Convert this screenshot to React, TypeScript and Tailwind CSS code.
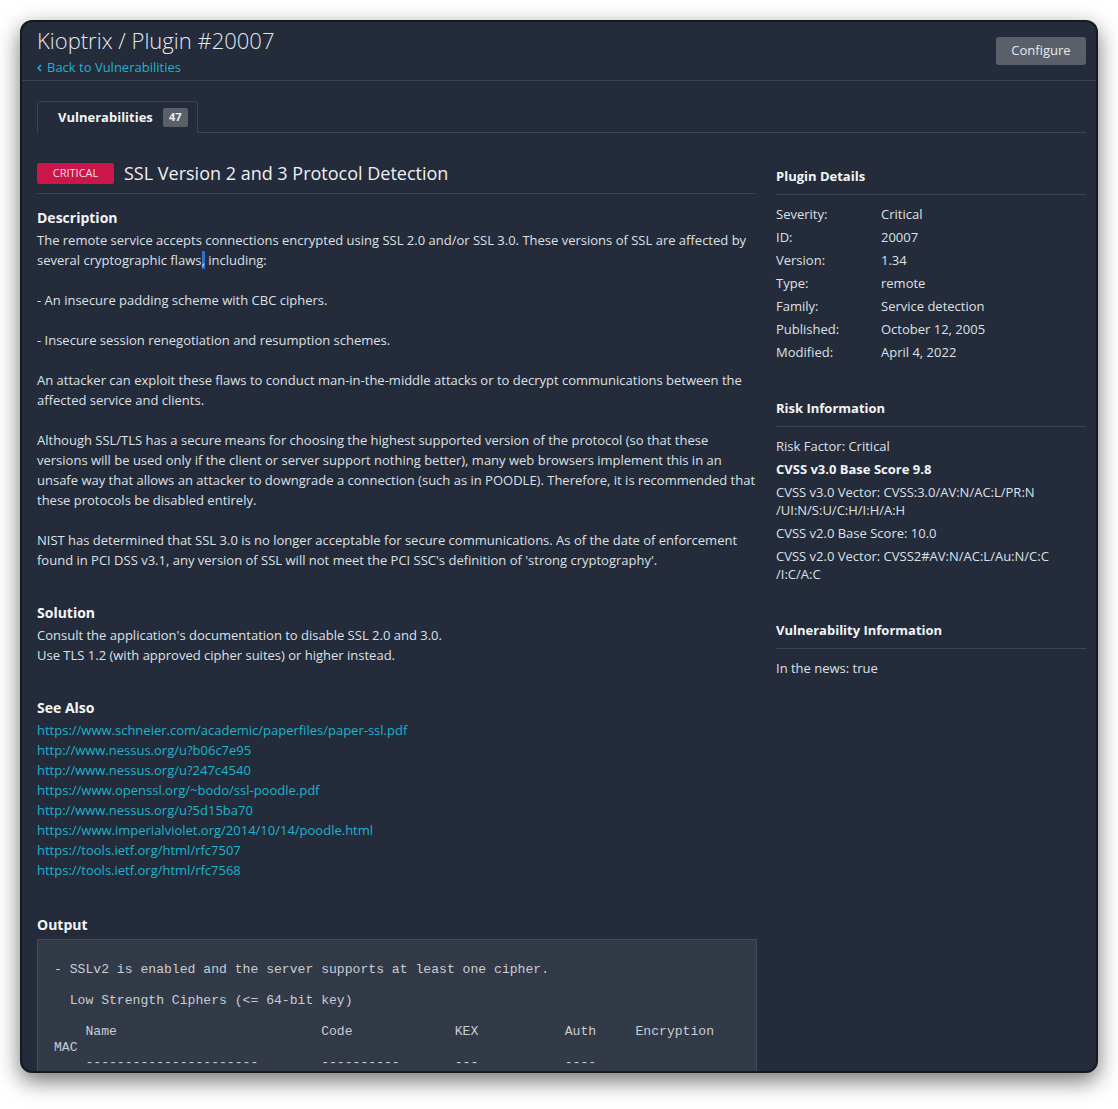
import React from 'react';

const pluginDetails: [string, string][] = [
  ['Severity:', 'Critical'],
  ['ID:', '20007'],
  ['Version:', '1.34'],
  ['Type:', 'remote'],
  ['Family:', 'Service detection'],
  ['Published:', 'October 12, 2005'],
  ['Modified:', 'April 4, 2022'],
];

const seeAlso = [
  'https://www.schneier.com/academic/paperfiles/paper-ssl.pdf',
  'http://www.nessus.org/u?b06c7e95',
  'http://www.nessus.org/u?247c4540',
  'https://www.openssl.org/~bodo/ssl-poodle.pdf',
  'http://www.nessus.org/u?5d15ba70',
  'https://www.imperialviolet.org/2014/10/14/poodle.html',
  'https://tools.ietf.org/html/rfc7507',
  'https://tools.ietf.org/html/rfc7568',
];

const output = `- SSLv2 is enabled and the server supports at least one cipher.

  Low Strength Ciphers (<= 64-bit key)

    Name                          Code             KEX           Auth     Encryption
MAC
    ----------------------        ----------       ---           ----`;

const SideSection = ({ title, children }: { title: string; children: React.ReactNode }) => (
  <div>
    <h3 className="text-[13px] leading-[20px] font-bold text-[#f3f5f7] pb-[8px] border-b border-[#3e4552]">{title}</h3>
    <div className="pt-[10px] flex flex-col gap-[5px]">{children}</div>
  </div>
);

export default function App() {
  return (
    <div className="min-h-[1109px] bg-white pt-[20px] pl-[20px]" style={{ fontFamily: '"Open Sans", "Noto Sans", sans-serif' }}>
      <div className="w-[1078px] h-[1053px] rounded-[12px] border-2 border-[#16191e] bg-[#242b3a] overflow-hidden shadow-[0_8px_22px_rgba(0,0,0,0.55)] text-[#dde1e6]">
        {/* Header */}
        <div className="flex justify-between pl-[15px] pr-[10px] pt-[4px] pb-[2px] border-b border-[#3e4552]">
          <div>
            <h1 className="text-[22px] leading-[28px] font-light text-[#e4e7eb]">Kioptrix / Plugin #20007</h1>
            <a className="mt-[2px] flex items-center gap-[5px] text-[13px] leading-[22px] text-[#1eb4cc]">
              <svg width="5" height="8" viewBox="0 0 5 8" className="mt-[1px]">
                <path d="M4 1 L1.2 4 L4 7" stroke="#1eb4cc" strokeWidth="1.6" fill="none" />
              </svg>
              Back to Vulnerabilities
            </a>
          </div>
          <button className="mt-[11px] self-start h-[28px] w-[90px] rounded-[3px] bg-[#5b5f6a] text-[13px] text-[#e8eaed]">Configure</button>
        </div>

        <div className="pl-[15px] pr-[10px]">
          {/* Tabs */}
          <div className="mt-[20px] flex border-b border-[#3e4552]">
            <div className="-mb-px flex items-center h-[32px] w-[161px] pl-[20px] border border-b-0 border-[#3e4552] rounded-t-[3px] bg-[#242b3a]">
              <span className="text-[13px] font-bold text-[#f3f5f7]">Vulnerabilities</span>
              <span className="ml-[10px] h-[19px] w-[25px] flex items-center justify-center rounded-[2px] bg-[#5b5f6a] text-[11px] font-bold text-[#eceef1]">47</span>
            </div>
          </div>

          <div className="flex gap-[19px] mt-[26px]">
            {/* Left column */}
            <div className="w-[720px]">
              <div className="flex items-center gap-[10px] pb-[6px] mr-[2px] border-b border-[#3e4552]">
                <span className="h-[21px] w-[77px] flex items-center justify-center rounded-[2px] bg-[#cc1548] text-[11px] text-[#f6dde4]">CRITICAL</span>
                <h2 className="text-[18px] leading-[28px] text-[#eef0f3]">SSL Version 2 and 3 Protocol Detection</h2>
              </div>

              <h3 className="mt-[12px] text-[14px] leading-[23px] font-bold text-[#f3f5f7]">Description</h3>
              <p className="mt-[1px] text-[13px] leading-[20px] whitespace-pre-line">
                The remote service accepts connections encrypted using SSL 2.0 and/or SSL 3.0. These versions of SSL are affected by several cryptographic flaws
                <span className="bg-[#2f6fd0]">,</span>
                {` including:

- An insecure padding scheme with CBC ciphers.

- Insecure session renegotiation and resumption schemes.

An attacker can exploit these flaws to conduct man-in-the-middle attacks or to decrypt communications between the affected service and clients.

Although SSL/TLS has a secure means for choosing the highest supported version of the protocol (so that these versions will be used only if the client or server support nothing better), many web browsers implement this in an unsafe way that allows an attacker to downgrade a connection (such as in POODLE). Therefore, it is recommended that these protocols be disabled entirely.

NIST has determined that SSL 3.0 is no longer acceptable for secure communications. As of the date of enforcement found in PCI DSS v3.1, any version of SSL will not meet the PCI SSC's definition of 'strong cryptography'.`}
              </p>

              <h3 className="mt-[31px] text-[14px] leading-[23px] font-bold text-[#f3f5f7]">Solution</h3>
              <p className="mt-[1px] text-[13px] leading-[20px]">
                Consult the application's documentation to disable SSL 2.0 and 3.0.
                <br />
                Use TLS 1.2 (with approved cipher suites) or higher instead.
              </p>

              <h3 className="mt-[31px] text-[14px] leading-[23px] font-bold text-[#f3f5f7]">See Also</h3>
              <div className="mt-[1px] flex flex-col">
                {seeAlso.map((url) => (
                  <a key={url} className="text-[13px] leading-[20px] text-[#1eb4cc]">{url}</a>
                ))}
              </div>

              <h3 className="mt-[33px] text-[14px] leading-[23px] font-bold text-[#f3f5f7]">Output</h3>
              <div className="mt-[3px] border border-[#434a59] bg-[#323947] pt-[22px] pl-[16px] pr-[16px] pb-[20px]">
                <pre className="text-[13.1px] leading-[15.5px] text-[#c9cdd4] whitespace-pre" style={{ fontFamily: '"Liberation Mono", "Courier New", monospace' }}>
                  {output}
                </pre>
              </div>
            </div>

            {/* Right column */}
            <div className="w-[310px] flex flex-col gap-[37px] pt-[7px]">
              <SideSection title="Plugin Details">
                {pluginDetails.map(([k, v]) => (
                  <div key={k} className="flex text-[13px] leading-[18px]">
                    <span className="w-[105px] shrink-0">{k}</span>
                    <span>{v}</span>
                  </div>
                ))}
              </SideSection>
              <SideSection title="Risk Information">
                <div className="text-[13px] leading-[18px]">Risk Factor: Critical</div>
                <div className="text-[13px] leading-[18px] font-bold text-[#f3f5f7]">CVSS v3.0 Base Score 9.8</div>
                <div className="text-[13px] leading-[18px]">
                  CVSS v3.0 Vector: CVSS:3.0/AV:N/AC:L/PR:N
                  <br />
                  /UI:N/S:U/C:H/I:H/A:H
                </div>
                <div className="text-[13px] leading-[18px]">CVSS v2.0 Base Score: 10.0</div>
                <div className="text-[13px] leading-[18px]">
                  CVSS v2.0 Vector: CVSS2#AV:N/AC:L/Au:N/C:C
                  <br />
                  /I:C/A:C
                </div>
              </SideSection>
              <SideSection title="Vulnerability Information">
                <div className="text-[13px] leading-[18px]">In the news: true</div>
              </SideSection>
            </div>
          </div>
        </div>
      </div>
    </div>
  );
}
